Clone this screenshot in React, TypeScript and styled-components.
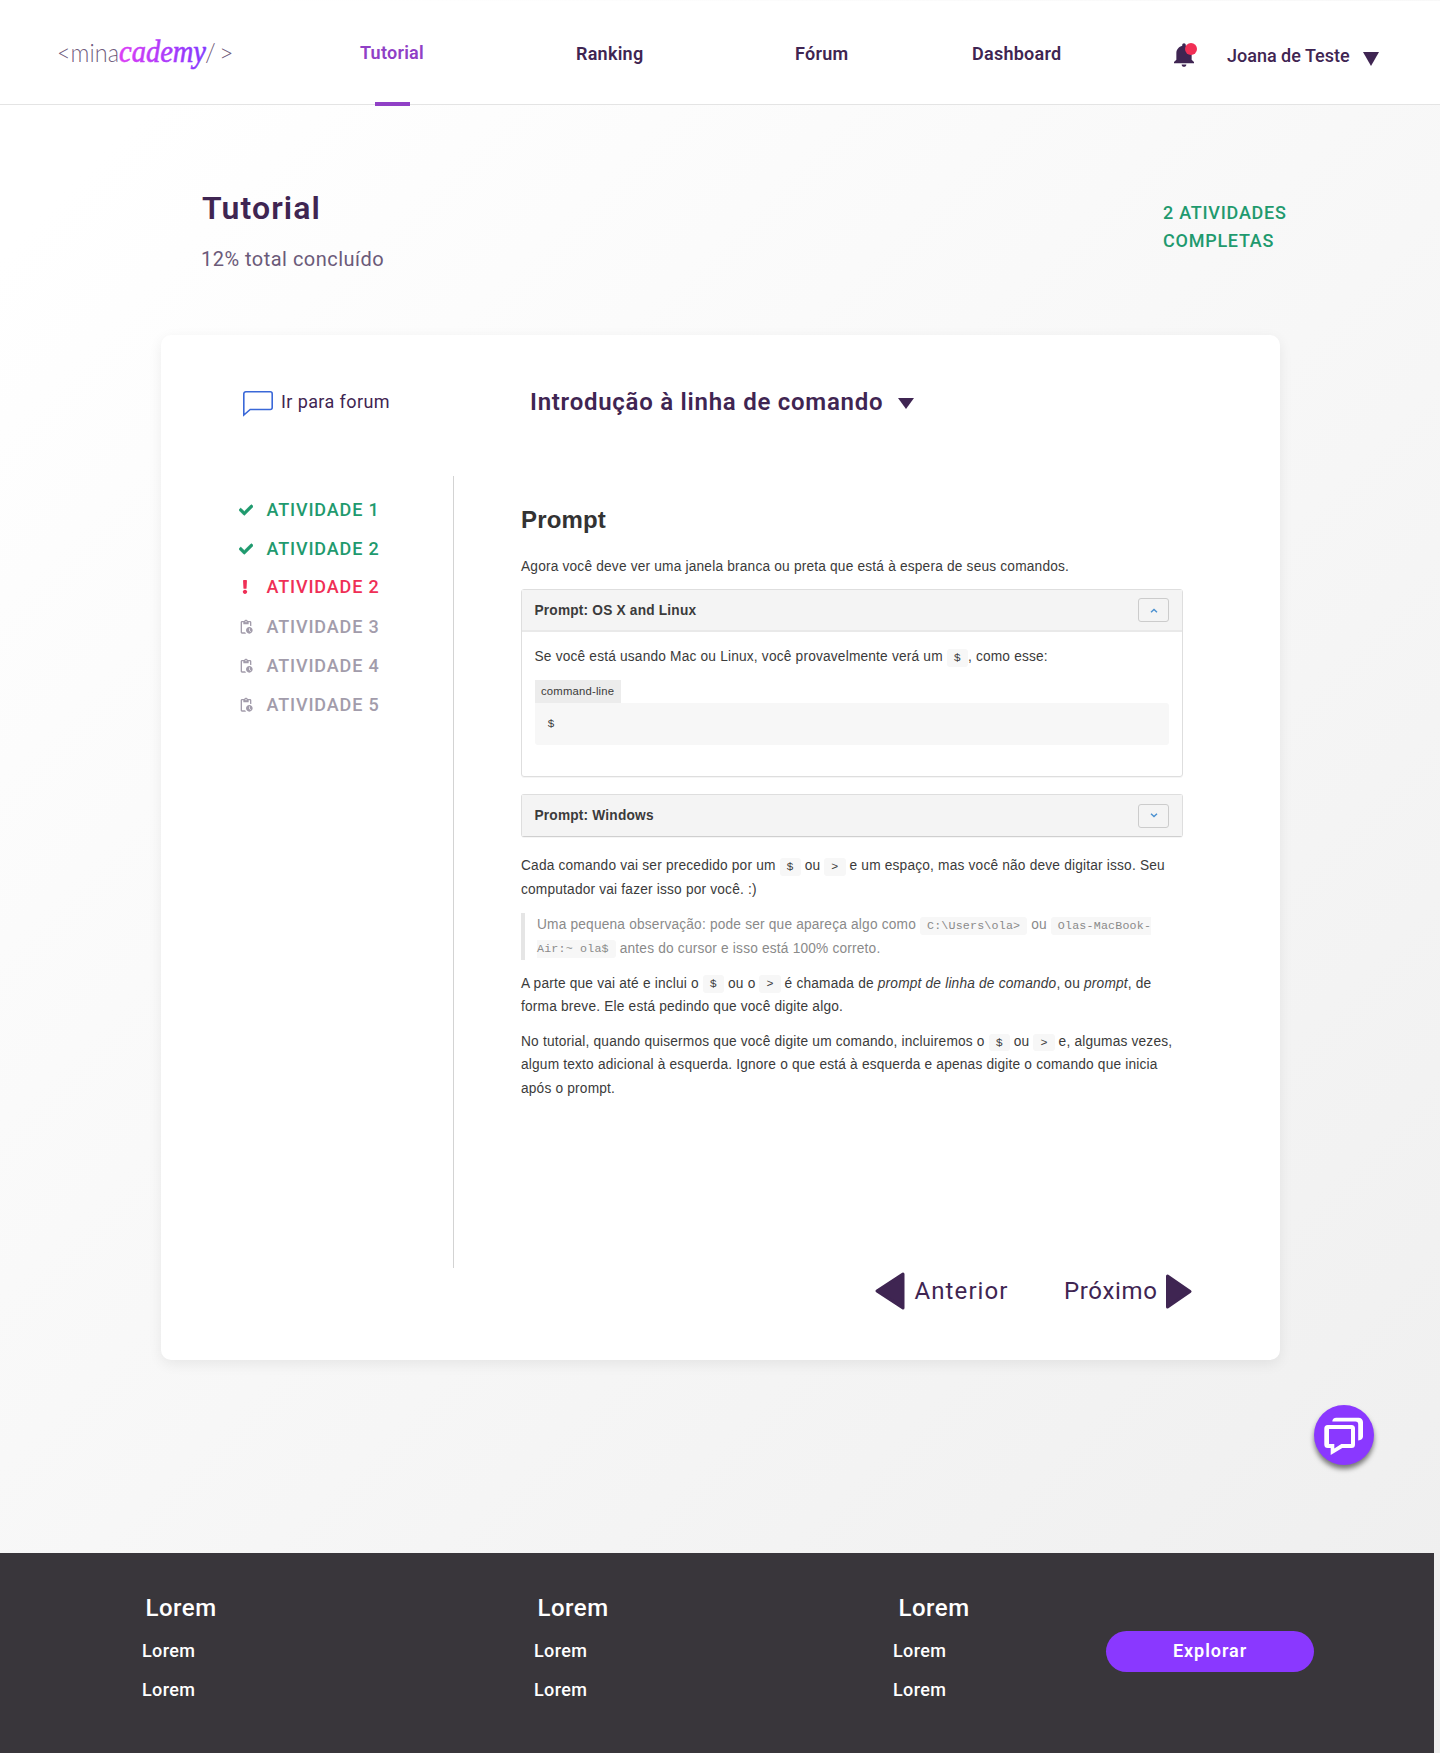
import React from "react";
import styled, { createGlobalStyle } from "styled-components";
import { FaCheck, FaExclamation } from "react-icons/fa";
import { MdPendingActions } from "react-icons/md";

const ink = "#3f2552";
const green = "#1f9a6e";

const Global = createGlobalStyle`
  * { box-sizing: border-box; }
  body { margin: 0; font-family: Roboto, "Open Sans", sans-serif; color: ${ink}; }
  p, h1, h2, ul, blockquote, pre { margin: 0; padding: 0; }
`;

const Page = styled.div`
  width: 1440px;
  height: 1753px;
  display: flex;
  flex-direction: column;
  background: linear-gradient(135deg, #ffffff 8%, #eeeeee 100%);
`;

const Header = styled.header`
  height: 104px;
  margin-top: 1px;
  flex: none;
  background: #fff;
  border-bottom: 1px solid #e4e4e4;
  display: grid;
  grid-template-columns: 302px 216px 219px 177px 202px 53px auto;
  padding-left: 58px;
`;

const Logo = styled.svg`
  margin-top: 29px;
  display: block;
`;

const NavLink = styled.a<{ $active?: boolean }>`
  position: relative;
  height: 103px;
  padding-top: ${(p) => (p.$active ? 41 : 42)}px;
  font-size: 18px;
  line-height: 22px;
  font-weight: 600;
  letter-spacing: 0.25px;
  color: ${(p) => (p.$active ? "#9040c6" : ink)};
  white-space: nowrap;
`;

const ActiveBar = styled.span`
  position: absolute;
  left: 15px;
  bottom: -2px;
  width: 35px;
  height: 4px;
  background: #9040c6;
`;

const BellSlot = styled.div`
  position: relative;
  padding-top: 42px;
`;

const BellDot = styled.span`
  position: absolute;
  left: 11px;
  top: 42px;
  width: 12px;
  height: 12px;
  border-radius: 50%;
  background: #f12f55;
`;

const UserMenu = styled.div`
  display: flex;
  align-items: flex-start;
  padding-top: 44px;
  font-size: 18px;
  line-height: 22px;
  font-weight: 500;
  white-space: nowrap;
`;

const UserName = styled.span`
  width: 136px;
`;

const Caret = styled.span<{ $h: number; $mt: number }>`
  width: 16px;
  height: ${(p) => p.$h}px;
  margin-top: ${(p) => p.$mt}px;
  background: ${ink};
  clip-path: polygon(0 0, 100% 0, 50% 100%);
`;

const Intro = styled.section`
  height: 230px;
  flex: none;
  display: flex;
  justify-content: space-between;
  padding: 83px 135px 0 202px;
`;

const Title = styled.h1`
  font-size: 32px;
  line-height: 40px;
  font-weight: 600;
  letter-spacing: 1.1px;
`;

const Subtitle = styled.p`
  margin-top: 11px;
  margin-left: -1px;
  font-size: 20px;
  line-height: 40px;
  letter-spacing: 0.48px;
  color: #6b5a79;
`;

const Completed = styled.p`
  width: 142px;
  padding-top: 11px;
  font-size: 18px;
  line-height: 28px;
  font-weight: 500;
  letter-spacing: 0.75px;
  color: ${green};
`;

const Card = styled.main`
  width: 1119px;
  height: 1025px;
  flex: none;
  margin-left: 161px;
  border-radius: 10px;
  background: #fff;
  box-shadow: 0 4px 14px rgba(0, 0, 0, 0.07);
  display: flex;
  flex-direction: column;
`;

const CardHead = styled.div`
  height: 141px;
  flex: none;
  display: flex;
  align-items: flex-start;
  padding: 50px 0 0 82px;
`;

const ForumLink = styled.a`
  display: flex;
  align-items: flex-start;
  width: 287px;
  font-size: 18px;
  line-height: 22px;
  letter-spacing: 0.4px;
  gap: 8px;
  & > svg { margin-top: 6px; flex: none; }
  & > span { margin-top: 6px; }
`;

const Lesson = styled.div`
  display: flex;
`;

const LessonTitle = styled.h2`
  width: 368px;
  font-size: 24px;
  line-height: 34px;
  font-weight: 600;
  letter-spacing: 0.74px;
  white-space: nowrap;
`;

const CardBody = styled.div`
  display: flex;
  height: 792px;
`;

const Side = styled.aside`
  width: 292px;
  padding: 22px 0 0 78px;
`;

type Status = "done" | "late" | "pending";
const tone: Record<Status, string> = { done: green, late: "#ef2f56", pending: "#a29cab" };

const Activity = styled.div<{ $status: Status; $h: number }>`
  display: flex;
  height: ${(p) => p.$h}px;
  font-size: 18px;
  line-height: 24px;
  font-weight: 500;
  letter-spacing: 0.85px;
  color: ${(p) => tone[p.$status]};
`;

const ActivityIcon = styled.span<{ $shift: number }>`
  width: ${(p) => 27.5 + p.$shift}px;
  margin-left: ${(p) => -p.$shift}px;
  height: 24px;
  display: flex;
  align-items: center;
`;

const Article = styled.article`
  border-left: 1px solid #d3d3d3;
  padding-left: 67px;
  font-family: "Liberation Sans", Arial, sans-serif;
  font-size: 13.71px;
  line-height: 23.3px;
  letter-spacing: 0.19px;
  color: #3b3b3b;
`;

const ArticleTitle = styled.h2`
  padding-top: 24px;
  font-size: 24px;
  line-height: 40px;
  letter-spacing: 0.17px;
  color: #333;
`;

const Para = styled.p<{ $mt?: number }>`
  width: 662px;
  margin-top: ${(p) => p.$mt ?? 11.7}px;
`;

const Quote = styled.blockquote`
  width: 662px;
  margin-top: 12.5px;
  padding-left: 12px;
  border-left: 4px solid #e5e5e5;
  color: #8a8a8a;
`;

const Code = styled.code`
  font-family: "Liberation Mono", monospace;
  font-size: 11.65px;
  line-height: 1;
  padding: 0.2em;
  background: #f7f7f7;
  border-radius: 3px;
  &::before, &::after { content: "\\00a0"; letter-spacing: -0.2em; }
`;

const Panel = styled.section<{ $mt: number; $shade?: boolean }>`
  width: 662px;
  margin-top: ${(p) => p.$mt}px;
  border: 1px solid #dedede;
  border-bottom-color: ${(p) => (p.$shade ? "#cfcfcf" : "#dedede")};
  border-radius: 3px;
  box-shadow: 0 1px 0 rgba(0, 0, 0, 0.04);
`;

const PanelHead = styled.div<{ $open?: boolean }>`
  height: ${(p) => (p.$open ? 42 : 41)}px;
  display: flex;
  justify-content: space-between;
  align-items: center;
  padding: 0 13px 0 12.5px;
  background: #f4f4f4;
  border-bottom: ${(p) => (p.$open ? "2px solid #e9e9e9" : "0")};
  font-weight: 700;
`;

const Toggle = styled.span`
  width: 31px;
  height: 24px;
  display: flex;
  align-items: center;
  justify-content: center;
  border: 1px solid #ccc;
  border-radius: 3px;
`;

const PanelBody = styled.div`
  height: 144px;
  padding: 13px 13px 0 12.5px;
`;

const CodeLabel = styled.div`
  width: 86px;
  height: 23px;
  margin-top: 11px;
  padding-left: 6.5px;
  background: #ececec;
  font-size: 11.3px;
  line-height: 22px;
`;

const CodeBlock = styled.pre`
  height: 42px;
  padding: 9px 13px;
  background: #f7f7f7;
  border-radius: 0 3px 3px 3px;
  font-family: "Liberation Mono", monospace;
  font-size: 11.65px;
  line-height: 24px;
`;

const Pager = styled.nav`
  display: flex;
  align-items: flex-start;
  padding: 3px 0 0 714px;
  font-size: 24px;
  line-height: 40px;
  & > svg { flex: none; }
`;

const PagerText = styled.span<{ $ml: number; $w: number; $ls: number }>`
  margin-left: ${(p) => p.$ml}px;
  width: ${(p) => p.$w}px;
  letter-spacing: ${(p) => p.$ls}px;
`;

const ChatRow = styled.div`
  flex: 1;
  display: flex;
  justify-content: flex-end;
  padding: 45px 66px 0 0;
`;

const ChatButton = styled.button`
  width: 60px;
  height: 60px;
  border: 0;
  padding: 0;
  border-radius: 50%;
  background: #8a38ff;
  box-shadow: 0 4px 5px rgba(0, 0, 0, 0.5);
  & > svg { display: block; }
`;

const Footer = styled.footer`
  width: 1434px;
  height: 200px;
  flex: none;
  display: grid;
  grid-template-columns: 392px 359px 213px auto;
  padding: 39px 0 0 142px;
  background: #39363b;
  color: #fff;
`;

const FooterTitle = styled.div<{ $pl: number }>`
  padding-left: ${(p) => p.$pl}px;
  font-size: 24px;
  line-height: 32px;
  height: 46px;
  font-weight: 500;
  letter-spacing: 0.5px;
`;

const FooterLink = styled.a`
  display: block;
  height: 39px;
  font-size: 18px;
  line-height: 26px;
  font-weight: 500;
  letter-spacing: 0.4px;
`;

const Explore = styled.button`
  width: 208px;
  height: 41px;
  margin-top: 39px;
  padding: 0;
  border: 0;
  border-radius: 21px;
  background: #8a38ff;
  color: #fff;
  font: 600 18px/39px Roboto, sans-serif;
  letter-spacing: 0.95px;
  display: flex;
  justify-content: center;
  align-items: flex-start;
`;

const activities: { label: string; status: Status; h: number }[] = [
  { label: "ATIVIDADE 1", status: "done", h: 39 },
  { label: "ATIVIDADE 2", status: "done", h: 38 },
  { label: "ATIVIDADE 2", status: "late", h: 40 },
  { label: "ATIVIDADE 3", status: "pending", h: 39 },
  { label: "ATIVIDADE 4", status: "pending", h: 39 },
  { label: "ATIVIDADE 5", status: "pending", h: 39 },
];

const iconShift: Record<Status, number> = { done: 0, late: 1.5, pending: 1.5 };

function StatusIcon({ status }: { status: Status }) {
  if (status === "done") return <FaCheck size={14} stroke="currentColor" strokeWidth={24} />;
  if (status === "late") return <FaExclamation size={14} />;
  return <MdPendingActions size={16} />;
}

export default function App() {
  return (
    <>
      <Global />
      <Page>
        <Header>
          <Logo width="180" height="48" viewBox="0 0 180 48">
            <defs>
              <linearGradient id="brand" x1="0" x2="1" y1="0" y2="0">
                <stop offset="0" stopColor="#dc3df5" />
                <stop offset="1" stopColor="#8338ff" />
              </linearGradient>
            </defs>
            <text x="-1" y="31.5" fontFamily="Lato" fontWeight="300" fontSize="25" fill={ink} fillOpacity="0.75" textLength="62" lengthAdjust="spacingAndGlyphs">&lt;mina</text>
            <text x="61" y="32" fontFamily="Liberation Serif" fontStyle="italic" fontSize="32" fill="url(#brand)" stroke="url(#brand)" strokeWidth="0.6" textLength="87" lengthAdjust="spacingAndGlyphs">cademy</text>
            <text x="147 161" y="31.5" fontFamily="Lato" fontWeight="300" fontSize="25" fill={ink} fillOpacity="0.75">/&gt;</text>
          </Logo>
          <NavLink $active>Tutorial<ActiveBar /></NavLink>
          <NavLink>Ranking</NavLink>
          <NavLink>Fórum</NavLink>
          <NavLink>Dashboard</NavLink>
          <BellSlot>
            <svg width="20" height="24" viewBox="80 48 352 416" fill={ink}>
              <path d="M256 464c22.779 0 41.411-18.719 41.411-41.6h-82.823c0 22.881 18.633 41.6 41.412 41.6zm134.589-124.8V224.8c0-63.44-44.516-117.518-103.53-131.041V79.2c0-17.682-13.457-31.2-31.059-31.2s-31.059 13.518-31.059 31.2v14.559c-59.015 13.523-103.53 67.601-103.53 131.041v114.4L80 380.8v20.8h352v-20.8l-41.411-41.6z" />
            </svg>
            <BellDot />
          </BellSlot>
          <UserMenu>
            <UserName>Joana de Teste</UserName>
            <Caret $h={14} $mt={7} />
          </UserMenu>
        </Header>

        <Intro>
          <div>
            <Title>Tutorial</Title>
            <Subtitle>12% total concluído</Subtitle>
          </div>
          <Completed>2 ATIVIDADES COMPLETAS</Completed>
        </Intro>

        <Card>
          <CardHead>
            <ForumLink>
              <svg width="30" height="26" viewBox="0 0 30 26" fill="none" stroke="#3a68d8" strokeWidth="1.6">
                <path d="M.8 24V2.8a2 2 0 0 1 2-2h24.4a2 2 0 0 1 2 2v13.7a2 2 0 0 1-2 2H7.2z" />
              </svg>
              <span>Ir para forum</span>
            </ForumLink>
            <Lesson>
              <LessonTitle>Introdução à linha de comando</LessonTitle>
              <Caret $h={11} $mt={13} />
            </Lesson>
          </CardHead>
          <CardBody>
            <Side>
              {activities.map((a, i) => (
                <Activity key={i} $status={a.status} $h={a.h}>
                  <ActivityIcon $shift={iconShift[a.status]}><StatusIcon status={a.status} /></ActivityIcon>
                  {a.label}
                </Activity>
              ))}
            </Side>
            <Article>
              <ArticleTitle>Prompt</ArticleTitle>
              <Para $mt={15}>Agora você deve ver uma janela branca ou preta que está à espera de seus comandos.</Para>
              <Panel $mt={11}>
                <PanelHead $open>
                  Prompt: OS X and Linux
                  <Toggle>
                    <svg width="8" height="5" viewBox="0 0 8 5" fill="none" stroke="#4a90d0" strokeWidth="1.4"><path d="M1 4.2 4 1.4l3 2.8" /></svg>
                  </Toggle>
                </PanelHead>
                <PanelBody>
                  <div>Se você está usando Mac ou Linux, você provavelmente verá um <Code>$</Code>, como esse:</div>
                  <CodeLabel>command-line</CodeLabel>
                  <CodeBlock>$</CodeBlock>
                </PanelBody>
              </Panel>
              <Panel $mt={17} $shade>
                <PanelHead>
                  Prompt: Windows
                  <Toggle>
                    <svg width="8" height="5" viewBox="0 0 8 5" fill="none" stroke="#4a90d0" strokeWidth="1.4"><path d="M1 .8l3 2.8L7 .8" /></svg>
                  </Toggle>
                </PanelHead>
              </Panel>
              <Para $mt={17}>Cada comando vai ser precedido por um <Code>$</Code> ou <Code>&gt;</Code> e um espaço, mas você não deve digitar isso. Seu computador vai fazer isso por você. :)</Para>
              <Quote>Uma pequena observação: pode ser que apareça algo como <Code>C:\Users\ola&gt;</Code> ou <Code>Olas-MacBook-Air:~ ola$</Code> antes do cursor e isso está 100% correto.</Quote>
              <Para>A parte que vai até e inclui o <Code>$</Code> ou o <Code>&gt;</Code> é chamada de <em>prompt de linha de comando</em>, ou <em>prompt</em>, de forma breve. Ele está pedindo que você digite algo.</Para>
              <Para>No tutorial, quando quisermos que você digite um comando, incluiremos o <Code>$</Code> ou <Code>&gt;</Code> e, algumas vezes, algum texto adicional à esquerda. Ignore o que está à esquerda e apenas digite o comando que inicia após o prompt.</Para>
            </Article>
          </CardBody>
          <Pager>
            <svg width="30" height="40" viewBox="0 1 30 40" fill={ink} stroke={ink} strokeWidth="3" strokeLinejoin="round"><path d="M28 4v34L2 21z" /></svg>
            <PagerText $ml={9.5} $w={151} $ls={1.1}>Anterior</PagerText>
            <PagerText $ml={-1.5} $w={102} $ls={0.65}>Próximo</PagerText>
            <svg width="26" height="40" viewBox="0 1 26 40" fill={ink} stroke={ink} strokeWidth="3" strokeLinejoin="round"><path d="M1.5 6v31L24 21.5z" /></svg>
          </Pager>
        </Card>

        <ChatRow>
          <ChatButton aria-label="Chat">
            <svg width="60" height="60" viewBox="0 0 60 60" fill="#fff">
              <path fillRule="evenodd" d="M13.8 20H37.5a3.5 3.5 0 0 1 3.5 3.5v16a3.5 3.5 0 0 1-3.5 3.5H28.3L16.7 50V43H13.8a3.5 3.5 0 0 1-3.5-3.5v-16a3.5 3.5 0 0 1 3.5-3.5zM15 24V39h5.3v4.6L27.3 39H37V24z" />
              <path d="M18.3 16.6c0-2.2 1.6-3.9 3.9-3.9H44.6a4.4 4.4 0 0 1 4.4 4.4v14.4c0 2.2-1.8 3.9-4.8 3.9V19.4a2.8 2.8 0 0 0-2.8-2.8z" />
            </svg>
          </ChatButton>
        </ChatRow>

        <Footer>
          {[3.5, 3.5, 5.5].map((pl, i) => (
            <div key={i}>
              <FooterTitle $pl={pl}>Lorem</FooterTitle>
              <FooterLink>Lorem</FooterLink>
              <FooterLink>Lorem</FooterLink>
            </div>
          ))}
          <Explore>Explorar</Explore>
        </Footer>
      </Page>
    </>
  );
}
